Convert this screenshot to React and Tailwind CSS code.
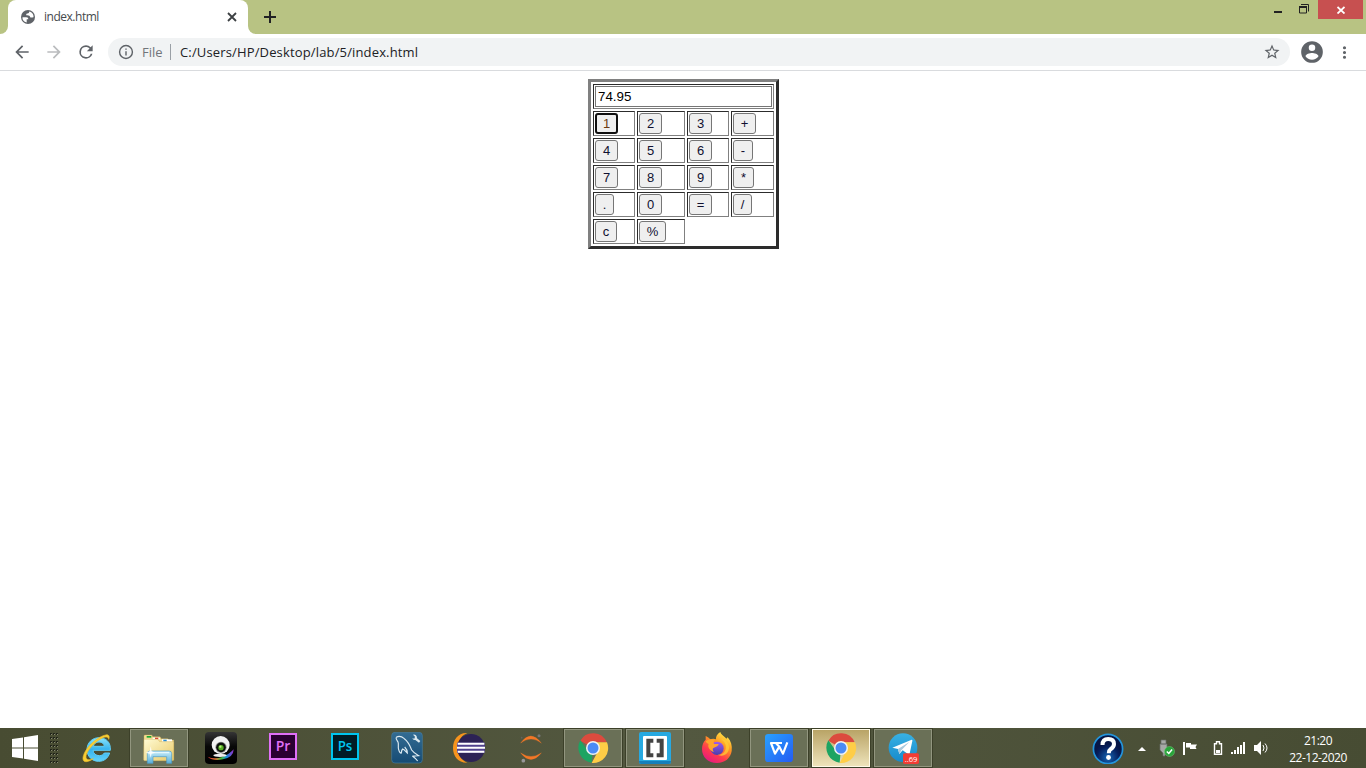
import React from "react";

const S = ({ children }) => (
  <svg viewBox="0 0 96 96" className="block h-8 w-8 shrink-0">{children}</svg>
);

const IE = () => (
  <S>
    <defs>
      <linearGradient id="ieb" x1="0" y1="0" x2="0" y2="1">
        <stop offset="0" stopColor="#8be4fb" /><stop offset=".5" stopColor="#35b3ee" /><stop offset="1" stopColor="#62d3fa" />
      </linearGradient>
    </defs>
    <path d="M88 55H36c1 10 9 16 19 16 7 0 12-3 15-8h16c-5 16-17 25-33 25C33 88 18 73 18 53S33 17 54 17c22 0 36 15 34 38zM37 43h33c-1-8-7-13-16-13s-15 5-17 13z" fill="url(#ieb)" stroke="#5fcdf5" strokeWidth="3" />
    <path d="M83 22c4-9 0-15-9-13C55 12 25 36 13 58 3 75 3 91 17 89c7-1 14-5 20-9-11 4-21 5-22-4-1-12 14-33 33-48C65 15 82 9 83 22z" fill="#f8cf35" stroke="#eab92a" strokeWidth="2" />
  </S>
);

const Explorer = () => (
  <S>
    <defs>
      <linearGradient id="fol" x1="0" y1="0" x2="1" y2="1"><stop stopColor="#fffbd4" /><stop offset="1" stopColor="#e9c967" /></linearGradient>
      <linearGradient id="fob" x1="0" y1="0" x2="0" y2="1"><stop stopColor="#c9eefa" /><stop offset="1" stopColor="#59aeda" /></linearGradient>
    </defs>
    <path d="M3 12q0-3 3-3h19q3 0 4 5h21q3 0 4 6h19q3 0 4 4h15v60H3z" fill="#f2dc93" stroke="#d0b057" strokeWidth="1" />
    <path d="M11 12h14v5H11z" fill="#19a833" />
    <path d="M29 17h20l3 5H29z" fill="#fff" /><path d="M36 17h10v5H36z" fill="#d64b34" />
    <path d="M57 22h30v7H57z" fill="#fff" /><path d="M61 23h10v5H61z" fill="#258bd1" />
    <path d="M3 22h41l6 7h42v54q0 3-3 3H5q-3 0-3-3z" fill="url(#fol)" stroke="#c9a850" />
    <path d="M13 94V65q0-8 8-8h57q8 0 8 8v29H71V74H30v20z" fill="url(#fob)" stroke="#4c9cc7" strokeWidth="2" />
    <path d="M20 62h58" stroke="#eefcff" strokeWidth="3" />
    <path d="M23 43l3 15 12 4-12 3-3 12-3-12-12-3 12-4z" fill="#fff" opacity=".85" />
  </S>
);

const Webcam = () => (
  <S>
    <defs>
      <linearGradient id="rain"><stop stopColor="#e53434" /><stop offset=".3" stopColor="#db7030" /><stop offset=".52" stopColor="#45bf39" /><stop offset=".72" stopColor="#138fdb" /><stop offset="1" stopColor="#9a2cca" /></linearGradient>
      <linearGradient id="wbg" x2="0" y2="1"><stop stopColor="#353535" /><stop offset=".45" stopColor="#080808" /><stop offset="1" stopColor="#000" /></linearGradient>
    </defs>
    <rect width="96" height="96" rx="12" fill="url(#wbg)" />
    <path d="M8 74q19 9 44 1 22-9 34-23 0 24-32 30-31 6-46-8z" fill="url(#rain)" />
    <ellipse cx="45" cy="70" rx="20" ry="5" fill="#eee" />
    <circle cx="47" cy="39" r="27" fill="#f2f2f2" />
    <circle cx="48" cy="46" r="17" fill="#999" /><circle cx="48" cy="46" r="14.5" fill="#0c100c" />
    <circle cx="48" cy="47" r="8" fill="#55ad20" /><circle cx="46" cy="44" r="3.5" fill="#b8ef84" />
  </S>
);

const Adobe = ({ label, color, bg }) => (
  <S>
    <rect x="9" y="6" width="78" height="75" fill={bg} stroke={color} strokeWidth="6" />
    <text x="48" y="58" textAnchor="middle" fontFamily="Open Sans, sans-serif" fontWeight="600" fontSize="45" fill={color} textLength="44" lengthAdjust="spacingAndGlyphs">{label}</text>
  </S>
);

const MySQL = () => (
  <S>
    <defs><linearGradient id="my" x2="0" y2="1"><stop stopColor="#336c93" /><stop offset="1" stopColor="#164b74" /></linearGradient></defs>
    <rect x="2" y="1" width="92" height="92" rx="10" fill="url(#my)" stroke="#467c9d" strokeWidth="2" />
    <path d="M16 16c7-5 17-2 24 4 12 9 16 18 22 34 5 8 12 12 21 17-8 1-14 2-19 1 6 4 11 9 16 15M16 16c-3 4 3 10 5 14 3 8-1 16 2 23 2 7 5 11 8 10 0-5 2-10 4-12 6 2 9 8 14 12 0-9-3-13-8-18" fill="none" stroke="#dceaf1" strokeWidth="3.5" />
    <path d="M66 8q8-2 11 5l1 6 10 8-4 5-11-8q-8 1-9-5l6 1 2-6z" fill="#dce9ef" />
  </S>
);

const Eclipse = () => (
  <S>
    <path d="M43 3C16 1 0 23 0 48s16 45 43 44C23 84 14 66 14 48S23 11 43 3z" fill="#f7941e" />
    <circle cx="54" cy="48" r="42" fill="#2c2255" />
    <path d="M12 32h83v31H12z" fill="#50428e" />
    <path d="M14 35h80M12 47h84M14 59h80" stroke="#fff" strokeWidth="6" />
  </S>
);

const Jupyter = () => (
  <S>
    <path d="M17 33Q47-9 79 33 48 9 17 33zM17 63q31 39 62 0-31 21-62 0z" fill="#f37726" stroke="#f37726" strokeWidth="1" />
    <circle cx="72" cy="11" r="4.5" fill="#767677" /><circle cx="25" cy="86" r="5.5" fill="#989798" /><circle cx="20" cy="17" r="2.5" fill="#616262" />
  </S>
);

const Chrome = () => (
  <S>
    <path d="M48 48 9.9 26A44 44 0 0 1 89 31H48z" fill="#dc4b3e" />
    <path d="M48 48 44 92A45 45 0 0 1 9.9 25L33 57z" fill="#1da462" />
    <path d="M48 31h42A45 45 0 0 1 44 93l19-35z" fill="#ffcd46" />
    <circle cx="48" cy="48" r="21" fill="#f3f3f3" /><circle cx="48" cy="48" r="16.5" fill="#4c8bf5" />
  </S>
);

const Brackets = () => (
  <S>
    <rect width="96" height="96" rx="6" fill="#27a9e1" />
    <path d="M0 87h96q0 9-7 9H7q-7 0-7-9z" fill="#167fba" />
    <rect x="12" y="12" width="72" height="72" rx="3" fill="#fff" />
    <path d="M43 20H22v56h21V64H34V32h9zM53 20h21v56H53V64h9V32h-9z" fill="#434343" />
  </S>
);

const Firefox = () => (
  <S>
    <defs>
      <linearGradient id="ff" x1=".8" y1="0" x2=".2" y2="1"><stop stopColor="#fff44f" /><stop offset=".35" stopColor="#ff9b22" /><stop offset=".67" stopColor="#ff3b4c" /><stop offset="1" stopColor="#e31587" /></linearGradient>
      <linearGradient id="ffp" x2="0" y2="1"><stop stopColor="#a05bf2" /><stop offset="1" stopColor="#493eaa" /></linearGradient>
    </defs>
    <path d="M58 0c3 10 12 12 18 20l4-4c10 12 14 24 12 41-3 21-20 36-44 36C21 93 3 75 3 51c0-13 4-21 11-28V12c6 2 11 7 14 10 7-3 12-2 17 0-1-9 4-17 13-22z" fill="url(#ff)" />
    <circle cx="48" cy="49" r="20" fill="url(#ffp)" />
    <path d="M14 28c7-7 18-8 27-4-3 4-4 8-2 12h14c-2 8-10 9-16 12-3 3-2 8 2 12-14-4-20-16-16-24-4-1-7-3-9-8z" fill="#ffa52b" />
    <path d="M60 21c12 8 16 18 14 29-3 12-12 18-24 18 17 10 35-4 34-23-1-12-8-22-24-24z" fill="#ffcd34" opacity=".75" />
  </S>
);

const Wps = () => (
  <S>
    <defs><linearGradient id="wps" x2="1" y2="1"><stop stopColor="#28a1ff" /><stop offset="1" stopColor="#255cf2" /></linearGradient></defs>
    <rect x="6" y="6" width="84" height="84" rx="10" fill="url(#wps)" />
    <path d="M57 33H24l12 32 13-21 11 21 13-34M39 34l10 10" fill="none" stroke="#fff" strokeWidth="6.5" strokeLinejoin="round" />
  </S>
);

const Telegram = () => (
  <S>
    <defs><linearGradient id="tg" x2="0" y2="1"><stop stopColor="#38b1e4" /><stop offset="1" stopColor="#168acb" /></linearGradient></defs>
    <circle cx="48" cy="47" r="43" fill="url(#tg)" />
    <path d="M16 47 74 23q3 0 2 4l-9 42-20-14-10 11-4-15z" fill="#fff" /><path d="m33 51 34-21-24 25-6 12z" fill="#a9c9dd" />
    <rect x="48" y="64" width="48" height="32" rx="5" fill="#f23c34" />
    <text x="72" y="89" textAnchor="middle" fontFamily="Open Sans, sans-serif" fontSize="24" fill="#fff" textLength="38" lengthAdjust="spacingAndGlyphs">..69</text>
  </S>
);

const apps = [
  [IE], [Explorer, "box"], [Webcam],
  [() => <Adobe label="Pr" color="#e070f8" bg="#2a0033" />],
  [() => <Adobe label="Ps" color="#00c5f0" bg="#001c26" />],
  [MySQL], [Eclipse], [Jupyter], [Chrome, "box"], [Brackets, "box"], [Firefox], [Wps, "box"], [Chrome, "on"], [Telegram, "box"],
];

const slotStyle = {
  box: "border border-[#92967f] bg-[#6a7057] outline outline-1 outline-[#3c4029]",
  on: "border border-[#fffbe8] bg-linear-to-b from-[#b9a466] to-[#eee3ba] outline outline-1 outline-[#3c4029]",
};

const keys = [
  ["1", "w-[23px]", "text-[#6b3a10]"], ["2", "w-[23px]"], ["3", "w-[23px]"], ["+", "w-[23px]"],
  ["4", "w-[23px]"], ["5", "w-[23px]"], ["6", "w-[23px]"], ["-", "w-[20px]"],
  ["7", "w-[23px]"], ["8", "w-[23px]"], ["9", "w-[23px]"], ["*", "w-[21px]"],
  [".", "w-[19px]"], ["0", "w-[23px]"], ["=", "w-[23px]"], ["/", "w-[19px]"],
  ["c", "w-[22px]"], ["%", "w-[27px]"],
];

const cell = "h-[25px] border border-t-[#2c2c2c] border-l-[#2c2c2c] border-r-[#808080] border-b-[#808080] p-px";

const Calculator = () => (
  <div className="grid h-[170px] w-[191px] grid-cols-[42px_48px_42px_43px] content-start gap-[2px] border-[3px] border-t-[#808080] border-l-[#808080] border-r-[#2c2c2c] border-b-[#2c2c2c] p-[2px] font-['Liberation_Sans',Arial,sans-serif] text-[13.333px] text-black">
    <div className={cell + " col-span-4"}>
      <div className="flex h-[21px] items-center border border-[#767676] pl-[2px]">74.95</div>
    </div>
    {keys.map(([k, w, c], i) => (
      <div key={k} className={cell}>
        <button className={w + " flex h-[21px] items-center justify-center rounded-[3px] bg-[#efefef] text-[13px] leading-none " + (c || "text-[#101030]") + (i === 0 ? " border-2 border-[#101010]" : " border border-[#767676]")}>{k}</button>
      </div>
    ))}
  </div>
);

const Glyph = ({ d, className, fill = "#5f6368" }) => (
  <svg viewBox="0 0 24 24" className={"block shrink-0 " + className}><path d={d} fill={fill} /></svg>
);

export default function App() {
  return (
    <div className="flex h-[768px] w-[1366px] flex-col overflow-hidden bg-white font-['Open_Sans',sans-serif]">
      <div className="flex h-[34px] shrink-0 bg-[#b8c383]">
        <div className="flex w-2 items-end bg-white"><div className="h-[34px] w-2 rounded-br-lg bg-[#b8c383]" /></div>
        <div className="flex h-[34px] w-[240px] items-center rounded-t-lg bg-white pl-3">
          <svg viewBox="0 0 16 16" className="h-4 w-4 shrink-0">
            <circle cx="8" cy="8" r="7" fill="#5f6368" />
            <path d="M2.5 8.3h3.8c1.7 0 2 .7 2 2H6.7v3.2c-3-.5-4.6-2.8-4.2-5.2zM9.3 2.6c-.2 1.3-.6 2-1.7 2-1.2 0-1.4.5-1.4 1.7 2.7-.3 3.7.5 4.2 2.3h1.5c.5 0 .8-.4 1.6-.4.4-2.8-1.7-5-4.2-5.6z" fill="#fff" />
          </svg>
          <span className="ml-2 w-[180px] text-[12px] leading-4 tracking-[-0.48px] text-[#45494d]">index.html</span>
          <svg viewBox="0 0 16 16" className="h-4 w-4 shrink-0"><path d="m4 5 8 8m0-8-8 8" stroke="#3c4043" strokeWidth="1.8" transform="translate(0 -1)" /></svg>
        </div>
        <div className="flex w-2 bg-white"><div className="h-[34px] w-2 rounded-bl-lg bg-[#b8c383]" /></div>
        <div className="flex flex-1 items-center pl-[7px]">
          <svg viewBox="0 0 14 14" className="h-3.5 w-3.5"><path d="M7 1v12M1 7h12" stroke="#202124" strokeWidth="2" /></svg>
        </div>
        <div className="flex h-[19px] items-start">
          <svg viewBox="0 0 48 19" className="h-[19px] w-12">
            <path d="M4 11h8v2H4z" fill="#222" />
            <path d="M29.5 7v6h7V7zM31 4.5h7.5v7" fill="none" stroke="#222" strokeWidth="1" /><path d="M29 6h8v2h-8z" fill="#222" />
          </svg>
          <div className="mr-[3px] flex h-[19px] w-[45px] items-center justify-center bg-[#c75050]">
            <svg viewBox="0 0 8 8" className="h-2 w-2"><path d="m.5 1 7 6.5m0-6.5-7 6.5" stroke="#fff" strokeWidth="1.8" /></svg>
          </div>
        </div>
      </div>

      <div className="flex h-[37px] shrink-0 items-center border-b border-[#d9dbde] bg-white pl-3">
        <Glyph className="h-5 w-5" d="M20 11H7.83l5.59-5.59L12 4l-8 8 8 8 1.41-1.41L7.83 13H20v-2z" />
        <Glyph className="ml-3 h-5 w-5" fill="#babcbe" d="M12 4l-1.41 1.41L16.17 11H4v2h12.17l-5.58 5.59L12 20l8-8z" />
        <Glyph className="ml-3 h-5 w-5" d="M17.65 6.35A7.95 7.95 0 0 0 12 4a8 8 0 1 0 7.73 10h-2.08A6 6 0 1 1 12 6c1.66 0 3.14.69 4.22 1.78L13 11h7V4l-2.35 2.35z" />
        <div className="ml-3 flex h-7 w-[1182px] items-center rounded-full bg-[#f1f3f4] pl-[10px] text-[14px] leading-5">
          <Glyph className="h-4 w-4 scale-[1.07]" d="M11 17h2v-6h-2v6zm1-15a10 10 0 1 0 0 20 10 10 0 0 0 0-20zm0 18a8 8 0 1 1 0-16 8 8 0 0 1 0 16zM11 9h2V7h-2v2z" />
          <span className="ml-2 w-[28px] text-[13px] text-[#71757a]">File</span>
          <span className="h-4 w-px bg-[#9aa0a6]" />
          <span className="ml-[9px] flex-1 whitespace-nowrap text-[13px] tracking-[0.15px] text-[#202124]">C:/Users/HP/Desktop/lab/5/index.html</span>
          <Glyph className="mr-[9px] h-[18px] w-[18px]" d="m22 9.24-7.19-.62L12 2 9.19 8.63 2 9.24l5.46 4.73L5.82 21 12 17.27 18.18 21l-1.63-7.03L22 9.24zM12 15.4l-3.76 2.27 1-4.28-3.32-2.88 4.38-.38L12 6.1l1.71 4.04 4.38.38-3.32 2.88 1 4.28L12 15.4z" />
        </div>
        <Glyph className="ml-[9px] h-[26px] w-[26px]" d="M12 2a10 10 0 1 0 0 20 10 10 0 0 0 0-20zm0 3a3 3 0 1 1 0 6 3 3 0 0 1 0-6zm0 14.2a7.2 7.2 0 0 1-6-3.22c.03-1.99 4-3.08 6-3.08s5.97 1.09 6 3.08a7.2 7.2 0 0 1-6 3.22z" />
        <Glyph className="ml-[10px] h-[19px] w-[19px]" d="M12 8a2 2 0 1 0 0-4 2 2 0 0 0 0 4zm0 2a2 2 0 1 0 0 4 2 2 0 0 0 0-4zm0 6a2 2 0 1 0 0 4 2 2 0 0 0 0-4z" />
      </div>

      <main className="flex flex-1 justify-center pt-2 pl-px"><Calculator /></main>

      <footer className="flex h-10 shrink-0 items-center bg-linear-to-r from-[#484c32] via-[#535840] to-[#474c33]">
        <svg viewBox="0 0 27 26" className="ml-[12px] h-[26px] w-[27px]">
          <path d="M0 4 11 2.5v10H0zM12 2.3 26 0v12.5H12zM0 13.5h11v10L0 22zM12 13.5h14V26l-14-2.2z" fill="#fff" />
        </svg>
        <svg viewBox="0 0 9 30" className="ml-[11px] mr-[9px] h-[30px] w-[9px]">
          {[0, 3, 6].map((x) => (
            <g key={x}>
              <path d={`M${x + 1} 0v30`} stroke="#22251a" strokeWidth="2" strokeDasharray="2 2" />
              <path d={`M${x + 1.5} 1v29`} stroke="#85886f" strokeWidth="1" strokeDasharray="1 3" />
            </g>
          ))}
        </svg>
        <div className="flex gap-1">
          {apps.map(([Icon, kind], i) => (
            <div key={i} className={"flex h-[38px] w-[58px] items-center justify-center " + (slotStyle[kind] || "")}><Icon /></div>
          ))}
        </div>
        <div className="ml-[160px] flex items-center text-white">
          <svg viewBox="0 0 32 32" className="h-8 w-8">
            <defs><radialGradient id="help" cy=".8"><stop stopColor="#1566b6" /><stop offset=".75" stopColor="#061f5d" /><stop offset="1" stopColor="#061647" /></radialGradient></defs>
            <circle cx="16" cy="17" r="14.6" fill="url(#help)" stroke="#2495dc" strokeWidth="1.7" />
            <path d="M10.5 13q0-6 5.7-6 5.8 0 5.8 5 0 3-3.4 5.2Q16.8 18.500 16.8 21.200" fill="none" stroke="#fff" strokeWidth="4" />
            <circle cx="16.500" cy="25.500" r="2.400" fill="#fff" />
          </svg>
          <svg viewBox="0 0 8 8" className="ml-[14px] h-2 w-2"><path d="M0 7 4 3l4 4z" fill="#fff" /></svg>
          <svg viewBox="0 0 16 18" className="ml-[13px] h-[18px] w-4">
            <path d="M2 1h5v4H2zM1 5h7v6l-2 3v3H4v-3l-3-3z" fill="#a7a9a6" stroke="#696b68" strokeWidth=".7" />
            <circle cx="10.500" cy="12.500" r="5" fill="#29a53b" stroke="#76c879" strokeWidth=".5" /><path d="m7.8 12.500 2 2 3.300-4" fill="none" stroke="#fff" strokeWidth="1.500" />
          </svg>
          <svg viewBox="0 0 16 16" className="ml-2 h-4 w-4"><path d="M0 2h2v13H0zM3 3h5v1.500h6L12.500 7l1 2H7V7.500H3z" fill="#fff" /></svg>
          <svg viewBox="0 0 10 14" className="ml-[14px] h-3.5 w-2.5"><path d="M3.500.7h3v2h2v10.600h-7V2.700h2z" fill="none" stroke="#fff" strokeWidth="1.400" /><path d="M3 9h4v3H3z" fill="#fff" /></svg>
          <svg viewBox="0 0 16 12" className="ml-[7px] h-3 w-4"><path d="M1 10h2v2H1zM4 8h2v4H4zM7 5h2v7H7zM10 3h2v9h-2zM13 0h2v12h-2z" fill="#fff" /></svg>
          <svg viewBox="0 0 16 14" className="ml-2 h-3.5 w-4"><path d="M0 4h3l4-4v14l-4-4H0z" fill="#fff" /><path d="M9 4q2 3 0 6M11 2.500q4 4.500 0 9" fill="none" stroke="#fff" /></svg>
          <div className="ml-[18px] w-[60px] whitespace-nowrap pt-px text-center text-[12px] leading-[17px] tracking-[-0.5px]"><div>21:20</div><div>22-12-2020</div></div>
        </div>
      </footer>
    </div>
  );
}
